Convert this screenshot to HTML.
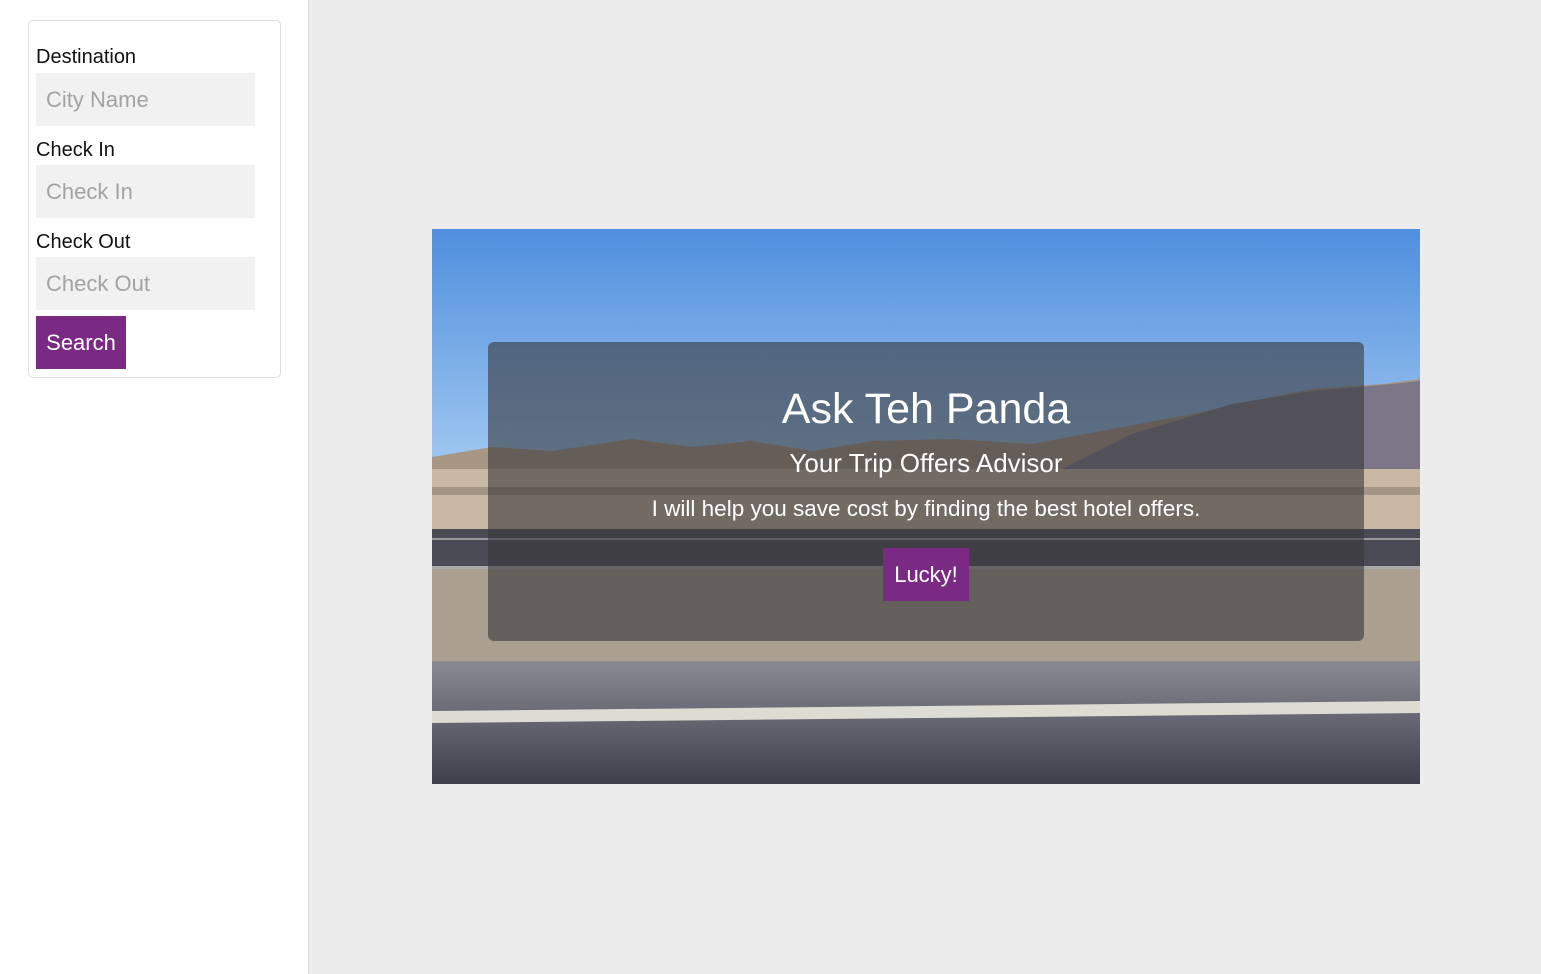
<!DOCTYPE html>
<html><head><meta charset="utf-8"><style>
*{box-sizing:border-box;margin:0;padding:0}
body{width:1541px;height:974px;background:#ececec;font-family:"Liberation Sans",sans-serif;position:relative;overflow:hidden}
.side{position:absolute;left:0;top:0;width:309px;height:974px;background:#fff;border-right:1px solid #dcdcdc}
.panel{position:absolute;left:28px;top:20px;width:253px;height:358px;border:1px solid #ddd;border-radius:5px;background:#fff}
.lbl{position:absolute;left:36px;font-size:20px;color:#111}
.inp{position:absolute;left:36px;width:219px;height:53px;background:#f1f1f1;color:#a3a3a3;font-size:22px;padding-left:10px;line-height:53px}
.btn{position:absolute;background:#7b2a83;color:#fff;font-size:22px;text-align:center;line-height:53px;height:53px;font-weight:500}
.hero{position:absolute;left:432px;top:229px;width:988px;height:555px;overflow:hidden}
.ov{position:absolute;left:488px;top:342px;width:876px;height:299px;background:rgba(55,55,58,0.6);border-radius:6px}
.t{position:absolute;left:488px;width:876px;text-align:center;color:#fff}
</style></head><body>
<div class="side"></div>
<div class="panel"></div>
<div class="lbl" style="top:46px">Destination</div>
<div class="inp" style="top:73px">City Name</div>
<div class="lbl" style="top:139px">Check In</div>
<div class="inp" style="top:165px">Check In</div>
<div class="lbl" style="top:231px">Check Out</div>
<div class="inp" style="top:257px">Check Out</div>
<div class="btn" style="left:36px;top:316px;width:90px">Search</div>

<div class="hero">
<svg width="988" height="555" viewBox="0 0 988 555">
<defs>
<linearGradient id="sky" x1="0" y1="0" x2="0" y2="1"><stop offset="0" stop-color="#4f8fdd"/><stop offset="1" stop-color="#a8cdf2"/></linearGradient>
<linearGradient id="rd" x1="0" y1="0" x2="0" y2="1"><stop offset="0" stop-color="#8a8a94"/><stop offset="1" stop-color="#3e3f4c"/></linearGradient>
</defs>
<rect width="988" height="260" fill="url(#sky)"/>
<path d="M0 228 L60 218 L120 222 L200 210 L260 218 L320 212 L380 222 L440 212 L520 210 L600 215 L680 200 L760 185 L830 170 L880 160 L950 155 L988 150 L988 260 L0 260Z" fill="#a89684"/>
<path d="M620 245 L700 205 L800 175 L880 162 L960 155 L988 152 L988 260 L620 260Z" fill="#7b7688"/>
<rect y="240" width="988" height="62" fill="#c9b9a4"/>
<rect y="258" width="988" height="8" fill="#6d6258" opacity=".4"/>
<rect y="300" width="988" height="40" fill="#4b4b55"/>
<rect y="309" width="988" height="2" fill="#999"/>
<rect y="337" width="988" height="3" fill="#aaa"/>
<rect y="340" width="988" height="92" fill="#ab9f90"/>
<rect y="432" width="988" height="123" fill="url(#rd)"/>
<polygon points="0,482 988,472 988,484 0,494" fill="#dcdcd2"/>
</svg>
</div>
<div class="ov"></div>
<div class="t" style="top:385px;font-size:43px;font-weight:500">Ask Teh Panda</div>
<div class="t" style="top:448px;font-size:26px;font-weight:500">Your Trip Offers Advisor</div>
<div class="t" style="top:496px;font-size:22.5px;font-weight:500">I will help you save cost by finding the best hotel offers.</div>
<div class="btn" style="left:883px;top:548px;width:86px">Lucky!</div>
</body></html>
